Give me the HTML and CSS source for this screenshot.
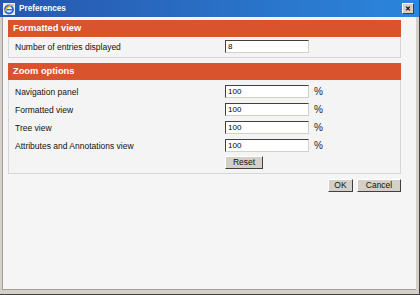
FILE: index.html
```html
<!DOCTYPE html>
<html lang="en">
<head>
    <meta charset="UTF-8">
    <title>Preferences</title>
    <link rel="stylesheet" href="styles.css">
</head>
<body>
    <div class="window">
        <div class="titlebar">
            <svg class="app-icon" width="12" height="12" viewBox="0 0 12 12">
                <rect x="0" y="0" width="12" height="12" fill="#e8eef8"/>
                <ellipse cx="6" cy="6.5" rx="4" ry="4" fill="none" stroke="#2a6fd0" stroke-width="2"/>
                <rect x="3" y="6" width="6" height="1.4" fill="#2a6fd0"/>
                <path d="M1 9 Q6 1 11 2" fill="none" stroke="#f0b020" stroke-width="1.3"/>
            </svg>
            <span class="title">Preferences</span>
            <span class="close">&#x2715;</span>
        </div>

        <div class="content">
            <div class="panel">
                <div class="panel-header">Formatted view</div>
                <div class="panel-body first">
                    <div class="row">
                        <label for="entries">Number of entries displayed</label>
                        <input type="text" id="entries" value="8">
                    </div>
                </div>
            </div>

            <div class="panel">
                <div class="panel-header">Zoom options</div>
                <div class="panel-body">
                    <div class="row">
                        <label for="zNav">Navigation panel</label>
                        <input type="text" id="zNav" value="100">
                        <span class="pct">%</span>
                    </div>
                    <div class="row">
                        <label for="zFormatted">Formatted view</label>
                        <input type="text" id="zFormatted" value="100">
                        <span class="pct">%</span>
                    </div>
                    <div class="row">
                        <label for="zTree">Tree view</label>
                        <input type="text" id="zTree" value="100">
                        <span class="pct">%</span>
                    </div>
                    <div class="row">
                        <label for="zAttr">Attributes and Annotations view</label>
                        <input type="text" id="zAttr" value="100">
                        <span class="pct">%</span>
                    </div>
                    <div class="row">
                        <span></span>
                        <div><button type="button" class="btn reset">Reset</button></div>
                    </div>
                </div>
            </div>

            <div class="actions">
                <button type="button" class="btn ok">OK</button>
                <button type="button" class="btn cancel">Cancel</button>
            </div>
        </div>
    </div>
</body>
</html>
```

FILE: styles.css
```css
body {
    margin: 0;
    padding: 0;
    font-family: "Liberation Sans", Arial, sans-serif;
    background-color: #d4d0c8;
}
.window {
    width: 420px;
    height: 295px;
    box-sizing: border-box;
    display: flex;
    flex-direction: column;
    background-color: #d4d0c8;
    border-right: 1px solid #404040;
    border-bottom: 1px solid #404040;
}
.titlebar {
    height: 17px;
    display: flex;
    align-items: center;
    padding: 0 4px 0 3px;
    background: linear-gradient(to right, #2757ad, #2b86dc);
}
.app-icon {
    margin-right: 4px;
}
.title {
    flex: 1;
    color: #fff;
    font-size: 8.2px;
    font-weight: bold;
}
.close {
    width: 10px;
    height: 9px;
    margin-right: 1px;
    background-color: #d4d0c8;
    border-top: 1px solid #fff;
    border-left: 1px solid #fff;
    border-right: 1px solid #404040;
    border-bottom: 1px solid #404040;
    color: #000;
    font-size: 7px;
    font-weight: bold;
    line-height: 9px;
    text-align: center;
}
.content {
    flex: 1;
    margin: 0 3px 4px 2px;
    padding: 3px 15px 0 5px;
    background-color: #f5f5f5;
    border-left: 1px solid #a0a0a0;
    border-bottom: 1px solid #a0a0a0;
}
.panel {
    border: 1px solid #d6d6d6;
    border-top: none;
    background-color: #f4f4f4;
    margin-bottom: 5px;
}
.panel-header {
    height: 17px;
    line-height: 17px;
    padding-left: 5px;
    margin: 0 -1px;
    background-color: #d9532c;
    color: #fff;
    font-size: 9.3px;
    font-weight: bold;
}
.panel-body {
    padding: 5px 0 4px 6px;
    display: flex;
    flex-direction: column;
    gap: 5px;
}
.panel-body.first {
    padding: 3px 0 4px 6px;
}
.row {
    display: grid;
    grid-template-columns: 205px 84px auto;
    column-gap: 5px;
    align-items: center;
    font-size: 8.5px;
    color: #111;
}
input {
    box-sizing: border-box;
    width: 84px;
    height: 13px;
    margin: 0;
    padding: 0 2px;
    font-family: "Liberation Sans", Arial, sans-serif;
    font-size: 8px;
    background-color: #fff;
    border-top: 1px solid #404040;
    border-left: 1px solid #404040;
    border-right: 1px solid #d4d0c8;
    border-bottom: 1px solid #d4d0c8;
    outline: none;
}
.pct {
    font-size: 10px;
    color: #222;
}
.btn {
    box-sizing: border-box;
    height: 13px;
    padding: 0;
    font-family: "Liberation Sans", Arial, sans-serif;
    font-size: 8.5px;
    color: #111;
    background-color: #d4d0c8;
    border-top: 1px solid #fff;
    border-left: 1px solid #fff;
    border-right: 1px solid #404040;
    border-bottom: 1px solid #404040;
    line-height: 11px;
}
.reset {
    width: 38px;
    margin-top: -1px;
}
.actions {
    display: flex;
    justify-content: flex-end;
    gap: 4px;
    margin-top: 2px;
}
.ok {
    width: 25px;
}
.cancel {
    width: 44px;
}
```
